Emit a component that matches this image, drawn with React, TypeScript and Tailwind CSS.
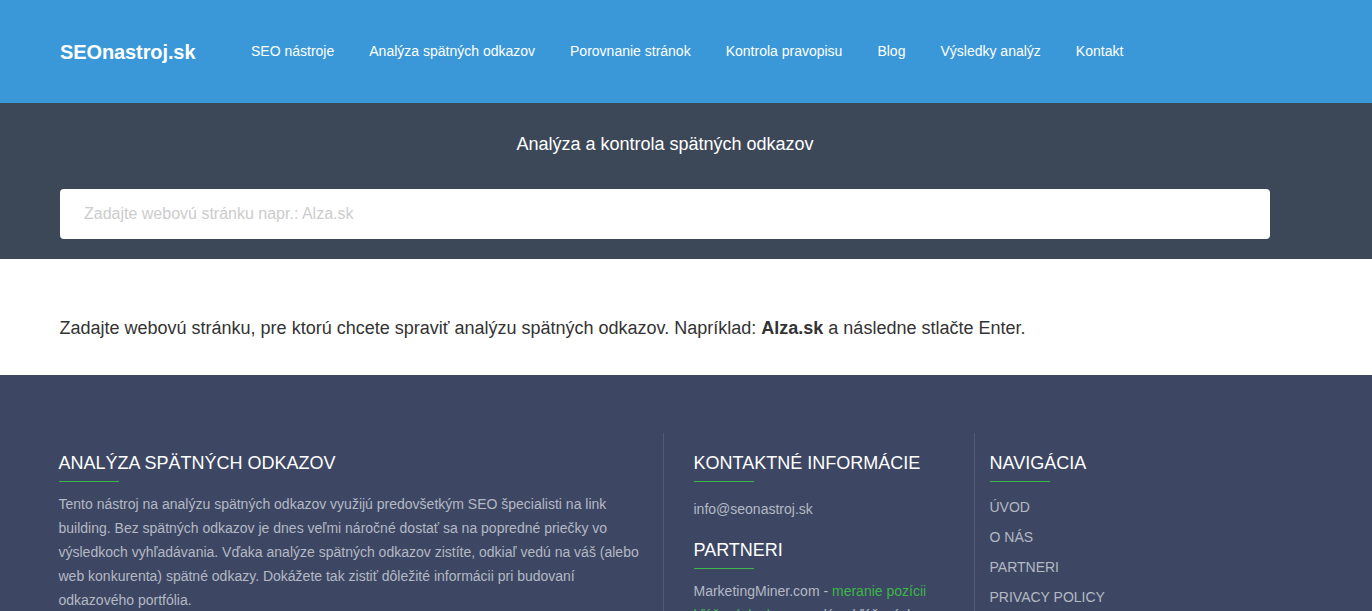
const navItems = [
  "SEO nástroje",
  "Analýza spätných odkazov",
  "Porovnanie stránok",
  "Kontrola pravopisu",
  "Blog",
  "Výsledky analýz",
  "Kontakt",
];

const footerLinks = ["ÚVOD", "O NÁS", "PARTNERI", "PRIVACY POLICY"];

function FooterTitle({ children }: { children: string }) {
  return (
    <div>
      <h3 className="text-[18px] leading-[20px] font-normal text-white">{children}</h3>
      <div className="mt-[8px] h-px w-[60px] bg-[#3cb648]" />
    </div>
  );
}

export default function App() {
  return (
    <div className="h-[611px] overflow-hidden bg-white font-['Liberation_Sans',Arial,sans-serif] text-[#333333]">
      <header className="flex h-[103px] items-center bg-[#3a98d9] pl-[60px]">
        <a className="w-[191px] text-[20px] font-bold tracking-[-0.1px] text-white">SEOnastroj.sk</a>
        <nav className="flex gap-[35px] text-[14px] text-white">
          {navItems.map((item) => (
            <a key={item}>{item}</a>
          ))}
        </nav>
      </header>

      <section className="h-[156px] bg-[#3c4858] pr-[102px] pl-[60px] pt-[30px]">
        <h1 className="text-center text-[18px] leading-[22px] font-normal text-white">
          Analýza a kontrola spätných odkazov
        </h1>
        <input
          className="mt-[34px] block h-[50px] w-full rounded-[4px] bg-white px-[24px] text-[16px] outline-none placeholder:text-[#cccccc]"
          placeholder="Zadajte webovú stránku napr.: Alza.sk"
        />
      </section>

      <section className="h-[116px] pr-[60px] pl-[59.5px] pt-[57px]">
        <p className="text-[18px] leading-[24px]">
          Zadajte webovú stránku, pre ktorú chcete spraviť analýzu spätných odkazov. Napríklad:{" "}
          <b>Alza.sk</b> a následne stlačte Enter.
        </p>
      </section>

      <footer className="flex h-[236px] bg-[#3d4763] pt-[58px] pl-[58.5px] text-[14px] text-[#b4b9c4]">
        <div className="w-[604.5px] pr-[15px] pt-[20px]">
          <FooterTitle>ANALÝZA SPÄTNÝCH ODKAZOV</FooterTitle>
          <p className="mt-[10px] leading-[24px]">
            Tento nástroj na analýzu spätných odkazov využijú predovšetkým SEO špecialisti na link building. Bez
            spätných odkazov je dnes veľmi náročné dostať sa na popredné priečky vo výsledkoch vyhľadávania. Vďaka
            analýze spätných odkazov zistíte, odkiaľ vedú na váš (alebo web konkurenta) spätné odkazy. Dokážete tak
            zistiť dôležité informácii pri budovaní odkazového portfólia.
          </p>
        </div>
        <div className="w-[311px] border-l border-[#515b76] pl-[29.5px] pt-[20px]">
          <FooterTitle>KONTAKTNÉ INFORMÁCIE</FooterTitle>
          <p className="mt-[17px] leading-[20px]">info@seonastroj.sk</p>
          <div className="mt-[21px]">
            <FooterTitle>PARTNERI</FooterTitle>
          </div>
          <p className="mt-[10px] w-[250px] leading-[24px]">
            MarketingMiner.com - <span className="text-[#3cb648]">meranie pozícii kľúčových slov</span> a analýza
            kľúčových slov
          </p>
        </div>
        <div className="flex-1 border-l border-[#515b76] pl-[14.5px] pt-[20px]">
          <FooterTitle>NAVIGÁCIA</FooterTitle>
          <ul className="mt-[10px]">
            {footerLinks.map((link) => (
              <li key={link} className="leading-[30px]">
                {link}
              </li>
            ))}
          </ul>
        </div>
      </footer>
    </div>
  );
}
